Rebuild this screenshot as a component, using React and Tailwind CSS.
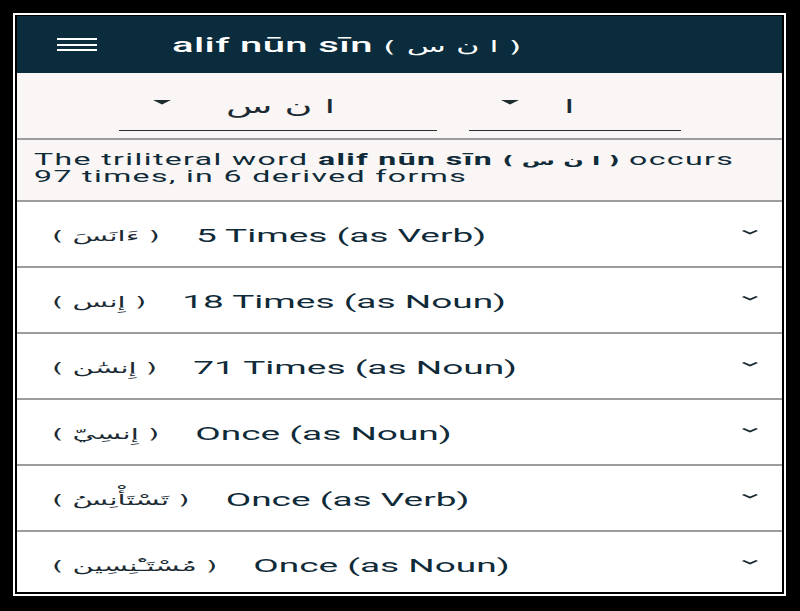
/**
 * Root detail — triliteral root with its derived forms.
 * The capture is a phone screen stretched 2x wide, so the phone layout is
 * built at its own width and scaled on x.
 */

const ROWS = [
  { ar: "ءَانَسَ", en: "5 Times (as Verb)" },
  { ar: "إِنس", en: "18 Times (as Noun)" },
  { ar: "إِنسَٰن", en: "71 Times (as Noun)" },
  { ar: "إِنسِيّ", en: "Once (as Noun)" },
  { ar: "تَسْتَأْنِسُ", en: "Once (as Verb)" },
  { ar: "مُسْتَـْٔنِسِين", en: "Once (as Noun)" },
];

const arabic = "font-['DejaVu_Sans',sans-serif]";

export default function App() {
  return (
    <div className="w-[800px] h-[611px] bg-black pt-[13px] pl-[13px]">
      <div className="w-[773px] h-[583px] border-2 border-white bg-black pt-px px-[2px] pb-[2px]">
        <div className="w-[765px] h-[576px] overflow-hidden bg-white">
          <div className="w-[382.5px] origin-top-left scale-x-200 font-['Roboto',sans-serif] text-[#0f2a38]">
            <TopBar />
            <RootPickers />
            <Summary />
            {ROWS.map((row) => (
              <FormRow key={row.en + row.ar} ar={row.ar} en={row.en} />
            ))}
          </div>
        </div>
      </div>
    </div>
  );
}

// ── Sub-components ───────────────────────────────

function TopBar() {
  return (
    <div className="h-[57px] bg-[#0a2c3c] flex items-center pl-[20px]">
      <div className="w-[20px] flex flex-col gap-[3.5px]">
        <div className="h-[2px] bg-white" />
        <div className="h-[2px] bg-white" />
        <div className="h-[2px] bg-white" />
      </div>
      <div className="ml-[37.5px] text-white text-[20px] font-medium tracking-[0.2px]">
        alif nūn sīn <span className={`${arabic} text-[16px]`}>( ا ن س )</span>
      </div>
    </div>
  );
}

function Caret() {
  return (
    <svg width="9" height="5" viewBox="0 0 9 5" className="shrink-0">
      <polygon points="0,0 9,0 4.5,4.5" fill="#1f2a30" />
    </svg>
  );
}

function RootPickers() {
  return (
    <div className="h-[67px] bg-[#f9f6f5] flex pl-[51px] border-b-2 border-[#9a9c9e]">
      <div className="mt-[10px] h-[48px] w-[158.5px] border-b border-[#2a2f33] flex items-center">
        <div className="ml-[16.5px] mb-[8px]">
          <Caret />
        </div>
        <span dir="rtl" className={`${arabic} ml-[28px] text-[19px] tracking-[-1px] text-[#1b2a33]`}>
          ا ن س
        </span>
      </div>
      <div className="ml-[16.5px] mt-[10px] h-[48px] w-[106px] border-b border-[#2a2f33] flex items-center">
        <div className="ml-[15.5px] mb-[8px]">
          <Caret />
        </div>
        <span dir="rtl" className={`${arabic} ml-[23px] text-[19px] text-[#1b2a33]`}>
          ا
        </span>
      </div>
    </div>
  );
}

function Summary() {
  return (
    <div className="h-[61.5px] bg-[#f9f6f5] px-[8.5px] pt-[12px] text-[16px] leading-[16.3px] tracking-[0.7px] border-b-2 border-[#9a9c9e]">
      The triliteral word{" "}
      <b>
        alif nūn sīn <span className={`${arabic} text-[12px] tracking-normal`}>( ا ن س )</span>
      </b>{" "}
      occurs
      <br />
      97 times, in 6 derived forms
    </div>
  );
}

function FormRow({ ar, en }) {
  return (
    <div className="h-[66px] bg-white flex items-center pl-[17.5px] pr-[12px] pt-[6px] border-b-2 border-[#9a9c9e]">
      <span className={`${arabic} text-[14.5px] text-[#1b2a33]`}>( {ar} )</span>
      <span className="ml-[18px] text-[18.5px]">{en}</span>
      <svg width="9" height="6" viewBox="0 0 9 6" className="ml-auto mb-[10px]">
        <path d="M1 1.5 L4.5 4.5 L8 1.5" fill="none" stroke="#1a2a33" strokeWidth="1.6" />
      </svg>
    </div>
  );
}
